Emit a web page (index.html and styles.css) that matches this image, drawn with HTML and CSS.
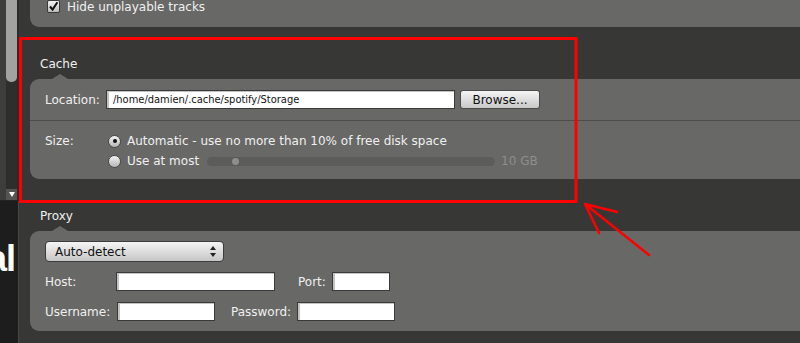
FILE: index.html
```html
<!DOCTYPE html>
<html lang="en">
<head>
  <meta charset="UTF-8" />
  <meta name="viewport" content="width=device-width, initial-scale=1.0"/>
  <title>Preferences</title>
  <link rel="stylesheet" href="styles.css">
</head>
<body>
  <div class="app">
    <div class="sidebar">
      <div class="scrollbar">
        <div class="scroll-track">
          <div class="scroll-thumb"></div>
          <div class="scroll-down"></div>
        </div>
      </div>
      <div class="logo">al</div>
    </div>

    <div class="prefs">
      <div class="panel panel-top">
        <label class="check-row">
          <span class="checkbox">
            <svg width="11" height="11" viewBox="0 0 11 11"><path d="M2 5.5 L4.6 8.6 L9.4 1.2" fill="none" stroke="#111" stroke-width="2"/></svg>
          </span>
          Hide unplayable tracks
        </label>
      </div>

      <h3 class="section-title">Cache</h3>
      <div class="panel">
        <div class="location-row">
          <label class="label location-label" for="location">Location:</label>
          <input class="text-field location-field" id="location" type="text" value="/home/damien/.cache/spotify/Storage" />
          <button class="button">Browse...</button>
        </div>
        <div class="size-row">
          <span class="label size-label">Size:</span>
          <div class="size-options">
            <div class="radio-row"><span class="radio checked"></span>Automatic - use no more than 10% of free disk space</div>
            <div class="radio-row">
              <span class="radio"></span>Use at most
              <div class="slider"><span class="slider-knob"></span></div>
              <span class="slider-value">10 GB</span>
            </div>
          </div>
        </div>
      </div>

      <h3 class="section-title">Proxy</h3>
      <div class="panel proxy-panel">
        <div class="select">
          <span>Auto-detect</span>
          <svg width="6" height="11" viewBox="0 0 6 11"><polygon points="0,4 3,0 6,4" fill="#222"/><polygon points="0,7 3,11 6,7" fill="#222"/></svg>
        </div>
        <div class="field-row">
          <label class="label host-label">Host:</label>
          <input class="text-field host-field" type="text" />
          <label class="label port-label">Port:</label>
          <input class="text-field port-field" type="text" />
        </div>
        <div class="field-row user-row">
          <label class="label user-label">Username:</label>
          <input class="text-field user-field" type="text" />
          <label class="label pass-label">Password:</label>
          <input class="text-field pass-field" type="password" />
        </div>
      </div>
    </div>

    <svg class="annotation" width="800" height="343" viewBox="0 0 800 343">
      <rect x="20.5" y="38.5" width="555.5" height="163" fill="none" stroke="#ff0000" stroke-width="3"/>
      <path d="M649 255 L585 204 M617 212 L585 204 L599 233" fill="none" stroke="#ff0000" stroke-width="2.5" stroke-linecap="round" stroke-linejoin="round"/>
    </svg>
  </div>
</body>
</html>
```

FILE: styles.css
```css
* {
  box-sizing: border-box;
}

body {
  margin: 0;
  width: 800px;
  height: 343px;
  overflow: hidden;
  background: #373836;
  font-family: "DejaVu Sans", sans-serif;
  font-size: 12px;
  color: #f0f0f0;
}

.app {
  position: relative;
  display: flex;
  height: 343px;
}

/* left strip: scrollbar + logo */
.sidebar {
  width: 19px;
  flex-shrink: 0;
  display: flex;
  flex-direction: column;
}

.scrollbar {
  height: 201px;
  padding-left: 6px;
  background: #3d3e3c;
  border-right: 2px solid #2b2c2a;
  border-bottom: 1px solid #232422;
}

.scroll-track {
  width: 11px;
  height: 200px;
  background: #2e2f2d;
  display: flex;
  flex-direction: column;
  justify-content: space-between;
}

.scroll-thumb {
  height: 82px;
  background: #a2a2a0;
  border-radius: 0 0 5px 5px;
}

.scroll-down {
  height: 11px;
  background: #545553;
  display: flex;
  align-items: center;
  justify-content: center;
}

.scroll-down::after {
  content: "";
  border-left: 3px solid transparent;
  border-right: 3px solid transparent;
  border-top: 5px solid #fff;
}

.logo {
  flex: 1;
  background: #1d1d1d;
  border-right: 1px solid #474846;
  overflow: hidden;
  display: flex;
  justify-content: flex-end;
  padding: 40px 3px 0 0;
  font-family: "Liberation Sans", sans-serif;
  font-size: 36px;
  line-height: 36px;
  font-weight: bold;
  letter-spacing: -1px;
  color: #fff;
}

/* preferences */
.prefs {
  flex: 1;
  padding-left: 11px;
  overflow: hidden;
}

.panel {
  position: relative;
  background: #686866;
  border-radius: 9px 0 0 9px;
}

.panel::before {
  content: "";
  position: absolute;
  top: -5px;
  left: 22px;
  border-left: 8px solid transparent;
  border-right: 8px solid transparent;
  border-bottom: 5px solid #686866;
}

.panel-top {
  height: 27px;
  padding-left: 17px;
  border-radius: 0 0 0 9px;
}

.panel-top::before {
  display: none;
}

.check-row {
  display: flex;
  align-items: center;
  height: 13px;
  line-height: 14px;
}

.checkbox {
  width: 13px;
  height: 13px;
  margin-right: 7px;
  margin-top: -1px;
  border: 1px solid #3a3a3a;
  border-radius: 2px;
  background: linear-gradient(#f2f2f2, #bdbdbd);
  display: flex;
  align-items: center;
  justify-content: center;
}

.section-title {
  margin: 0;
  padding: 30px 0 8px 10px;
  font-size: 12px;
  font-weight: normal;
  line-height: 14px;
}

.label {
  flex-shrink: 0;
}

.text-field {
  height: 19px;
  padding: 0 6px;
  border: 1px solid #3a3a3a;
  background: #fff;
  box-shadow: inset 2px 1px 0 #c3c3c3;
  font-family: "DejaVu Sans Condensed", "DejaVu Sans", sans-serif;
  font-stretch: condensed;
  font-size: 11px;
  color: #111;
  outline: none;
}

.location-row {
  height: 42px;
  padding-left: 15px;
  display: flex;
  align-items: center;
  border-bottom: 1px solid #4d4d4b;
}

.location-label {
  width: 61px;
}

.location-field {
  width: 349px;
}

.button {
  width: 80px;
  height: 19px;
  margin-left: 5px;
  padding: 0;
  border: 1px solid #4a4a4a;
  border-radius: 3px;
  background: linear-gradient(#f5f5f5, #c8c8c8);
  font-family: "DejaVu Sans", sans-serif;
  font-size: 12px;
  color: #111;
}

.size-row {
  display: flex;
  padding: 10px 0 8px 15px;
}

.size-label {
  width: 63px;
  line-height: 20px;
}

.radio-row {
  height: 20px;
  display: flex;
  align-items: center;
}

.radio {
  width: 13px;
  height: 13px;
  margin-right: 6px;
  border: 1px solid #4a4a4a;
  border-radius: 50%;
  background: linear-gradient(#f4f4f4, #b4b4b4);
  display: flex;
  align-items: center;
  justify-content: center;
}

.radio.checked::after {
  content: "";
  width: 4px;
  height: 4px;
  border-radius: 50%;
  background: #111;
}

.slider {
  width: 288px;
  height: 9px;
  margin-left: 8px;
  padding-left: 25px;
  border-radius: 5px;
  background: #5c5c5a;
  display: flex;
  align-items: center;
}

.slider-knob {
  width: 7px;
  height: 7px;
  border-radius: 50%;
  background: #8e8e8c;
}

.slider-value {
  margin-left: 6px;
  color: #8e8e8c;
}

.proxy-panel {
  padding: 10px 0 10px 15px;
}

.select {
  width: 179px;
  height: 21px;
  padding: 0 7px 0 9px;
  border: 1px solid #3c3c3c;
  border-radius: 4px;
  background: linear-gradient(#f5f5f5, #c6c6c6);
  color: #111;
  display: flex;
  align-items: center;
  justify-content: space-between;
}

.field-row {
  margin-top: 10px;
  display: flex;
  align-items: center;
}

.user-row {
  margin-top: 11px;
}

.host-label {
  width: 71px;
}

.host-field {
  width: 159px;
}

.port-label {
  width: 34px;
  margin-left: 23px;
}

.port-field {
  width: 58px;
}

.user-label {
  width: 72px;
}

.user-field,
.pass-field {
  width: 98px;
}

.pass-label {
  width: 66px;
  margin-left: 16px;
}

.annotation {
  position: absolute;
  top: 0;
  left: 0;
  pointer-events: none;
}
```
